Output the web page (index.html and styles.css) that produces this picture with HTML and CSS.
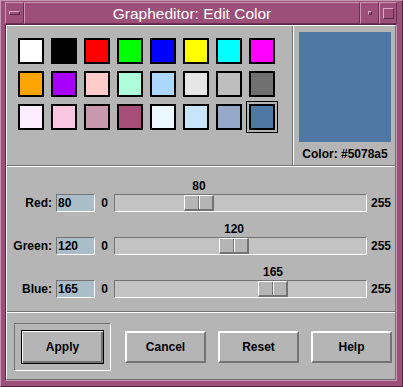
FILE: index.html
```html
<!DOCTYPE html>
<html lang="en">
<head>
    <meta charset="UTF-8">
    <title>Grapheditor: Edit Color</title>
    <link rel="stylesheet" href="styles.css">
</head>
<body>

    <div class="window">
        <div class="titlebar">
            <div class="tb-btn tb-menu"><span class="menu-icon"></span></div>
            <div class="tb-title">Grapheditor: Edit Color</div>
            <div class="tb-btn tb-min"><span class="min-icon"></span></div>
            <div class="tb-btn tb-max"><span class="max-icon"></span></div>
        </div>

        <div class="client">
            <div class="panel">
                <div class="top">
                    <div class="swatches" id="swatches"></div>
                    <div class="preview">
                        <div class="preview-box" id="preview-box"></div>
                        <div class="preview-text" id="preview-text"></div>
                    </div>
                </div>

                <div class="sliders" id="sliders"></div>

                <div class="buttons">
                    <div class="default-ring">
                        <button type="button" class="btn btn-default">Apply</button>
                    </div>
                    <button type="button" class="btn">Cancel</button>
                    <button type="button" class="btn">Reset</button>
                    <button type="button" class="btn">Help</button>
                </div>
            </div>
        </div>
    </div>

    <script>
        const colors = [
            '#ffffff', '#000000', '#ff0000', '#00ff00', '#0000ff', '#ffff00', '#00ffff', '#ff00ff',
            '#ffa500', '#a800ff', '#ffcaca', '#aeffd9', '#acd8ff', '#e6e6e6', '#bebebe', '#707070',
            '#fbecff', '#f9c6e0', '#c899ac', '#a65079', '#ebf9ff', '#c8e4f8', '#97a9c8', '#5078a5'
        ];
        const current = { red: 80, green: 120, blue: 165 };

        function toHex(n) {
            return n.toString(16).padStart(2, '0');
        }
        const hex = '#' + toHex(current.red) + toHex(current.green) + toHex(current.blue);

        const swatches = document.getElementById('swatches');
        colors.forEach(c => {
            const cell = document.createElement('div');
            cell.className = 'swatch' + (c === hex ? ' selected' : '');
            cell.style.backgroundColor = c;
            swatches.appendChild(cell);
        });

        document.getElementById('preview-box').style.backgroundColor = hex;
        document.getElementById('preview-text').textContent = 'Color: ' + hex;

        // trough is 253px wide, thumb 30px, 1px border
        const range = 253 - 2 - 30;
        const channels = [
            { label: 'Red:', value: current.red },
            { label: 'Green:', value: current.green },
            { label: 'Blue:', value: current.blue }
        ];
        const sliders = document.getElementById('sliders');
        channels.forEach(ch => {
            const offset = Math.round(ch.value / 255 * range);
            const row = document.createElement('div');
            row.className = 'scale-row';
            row.innerHTML = `
                <label class="scale-label">${ch.label}</label>
                <div class="entry">${ch.value}</div>
                <span class="scale-min">0</span>
                <div class="scale">
                    <div class="scale-value" style="margin-left:${offset + 1}px">${ch.value}</div>
                    <div class="trough"><div class="thumb" style="margin-left:${offset}px"></div></div>
                </div>
                <span class="scale-max">255</span>
            `;
            sliders.appendChild(row);
        });
    </script>

</body>
</html>
```

FILE: styles.css
```css
body {
    margin: 0;
    font-family: "Liberation Sans", Helvetica, Arial, sans-serif;
    font-size: 12px;
    font-weight: bold;
    color: #000;
}
.window {
    width: 403px;
    height: 387px;
    box-sizing: border-box;
    display: flex;
    flex-direction: column;
    padding: 1px 5px 5px 4px;
    background-color: #9c4f79;
    border-top: 1px solid #c996b4;
    border-left: 1px solid #c996b4;
    border-right: 1px solid #4f2240;
    border-bottom: 1px solid #4f2240;
}
.titlebar {
    display: flex;
    height: 22px;
}
.tb-btn, .tb-title {
    box-sizing: border-box;
    border-top: 1px solid #c996b4;
    border-left: 1px solid #c996b4;
    border-right: 1px solid #6e2f55;
    border-bottom: 1px solid #6e2f55;
    display: flex;
    align-items: center;
    justify-content: center;
}
.tb-btn {
    width: 19px;
}
.tb-max {
    width: 18px;
}
.tb-title {
    flex: 1;
    color: #fff;
    font-weight: normal;
    font-size: 15.5px;
    padding-top: 1px;
}
.menu-icon, .min-icon, .max-icon {
    box-sizing: border-box;
    border-top: 1px solid #d9a9c4;
    border-left: 1px solid #d9a9c4;
    border-right: 1px solid #5a2848;
    border-bottom: 1px solid #5a2848;
}
.menu-icon {
    width: 11px;
    height: 4px;
}
.min-icon {
    width: 4px;
    height: 4px;
}
.max-icon {
    width: 11px;
    height: 11px;
}
.client {
    flex: 1;
    display: flex;
    border-top: 1px solid #5a2848;
    border-left: 1px solid #5a2848;
    border-right: 1px solid #c996b4;
    border-bottom: 1px solid #c996b4;
}
.panel {
    flex: 1;
    display: flex;
    flex-direction: column;
    background-color: #b5b5b5;
    border-top: 1px solid #fff;
    border-left: 1px solid #fff;
    border-right: 1px solid #737373;
    border-bottom: 1px solid #737373;
}
.top {
    display: flex;
    height: 139px;
    border-bottom: 1px solid #737373;
}
.swatches {
    width: 286px;
    box-sizing: border-box;
    border-right: 1px solid #737373;
    display: grid;
    grid-template-columns: repeat(8, 26px);
    grid-auto-rows: 26px;
    gap: 7px;
    padding: 12px 0 0 11px;
}
.swatch {
    border: 2px solid #000;
    box-sizing: border-box;
}
.swatch.selected {
    outline: 1px solid #000;
    outline-offset: 2px;
}
.preview {
    flex: 1;
    border-left: 1px solid #fff;
    padding: 6px 4px 0 5px;
}
.preview-box {
    width: 92px;
    height: 110px;
}
.preview-text {
    margin-top: 5px;
    line-height: 14px;
    text-align: center;
}
.sliders {
    height: 131px;
    padding-top: 13px;
    border-top: 1px solid #fff;
    border-bottom: 1px solid #737373;
}
.scale-row {
    display: flex;
    align-items: flex-end;
    margin-bottom: 11px;
}
.scale-label {
    width: 45px;
    text-align: right;
    margin-right: 4px;
    line-height: 18px;
}
.entry {
    width: 39px;
    height: 18px;
    box-sizing: border-box;
    padding: 1px 0 0 1px;
    line-height: 14px;
    background-color: #a9bec8;
    border-top: 1px solid #737373;
    border-left: 1px solid #737373;
    border-right: 1px solid #fff;
    border-bottom: 1px solid #fff;
}
.scale-min {
    width: 19px;
    text-align: center;
    line-height: 18px;
}
.scale {
    width: 253px;
}
.scale-value {
    width: 30px;
    height: 14px;
    line-height: 12px;
    text-align: center;
}
.trough {
    height: 18px;
    box-sizing: border-box;
    background-color: #c3c3c3;
    border-top: 1px solid #737373;
    border-left: 1px solid #737373;
    border-right: 1px solid #fff;
    border-bottom: 1px solid #fff;
}
.thumb {
    width: 30px;
    height: 16px;
    box-sizing: border-box;
    background-color: #b5b5b5;
    border-top: 1px solid #fff;
    border-left: 1px solid #fff;
    border-right: 2px solid #737373;
    border-bottom: 2px solid #737373;
    background-image: linear-gradient(to right, transparent 13px, #737373 13px, #737373 14px, #fff 14px, #fff 15px, transparent 15px);
}
.scale-max {
    margin-left: 4px;
    line-height: 18px;
}
.buttons {
    flex: 1;
    display: flex;
    align-items: flex-start;
    gap: 12px;
    padding: 10px 0 0 7px;
    border-top: 1px solid #fff;
}
.default-ring {
    padding: 6px;
    margin-right: 2px;
    border-top: 1px solid #737373;
    border-left: 1px solid #737373;
    border-right: 1px solid #fff;
    border-bottom: 1px solid #fff;
}
.btn {
    width: 81px;
    height: 32px;
    margin-top: 8px;
    padding: 0;
    box-sizing: border-box;
    font-family: inherit;
    font-size: 12px;
    font-weight: bold;
    color: #000;
    background-color: #b5b5b5;
    border: 2px solid;
    border-color: #fff #737373 #737373 #fff;
}
.btn-default {
    width: 83px;
    height: 34px;
    margin-top: 0;
    display: block;
    border: 1px solid #000;
    box-shadow: inset 1px 1px 0 #fff, inset -2px -2px 0 #737373;
}
```
